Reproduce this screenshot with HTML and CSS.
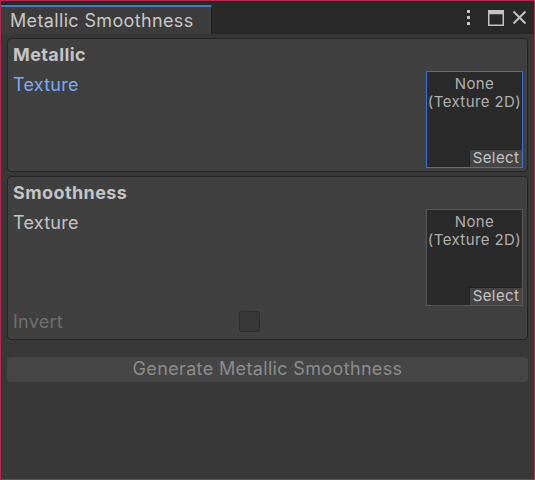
FILE: index.html
```html
<!DOCTYPE html>
<html>
<head>
<meta charset="utf-8">
<link rel="stylesheet" href="styles.css">
</head>
<body>
<div class="window">
  <div class="tabbar">
    <div class="tab">Metallic Smoothness</div>
    <div class="tab-icons">
      <svg class="ico" width="8" height="18" viewBox="0 0 8 18"><rect x="2" y="1" width="3" height="3" fill="#c4c4c4"/><rect x="2" y="7" width="3" height="3" fill="#c4c4c4"/><rect x="2" y="13" width="3" height="3" fill="#c4c4c4"/></svg>
      <svg class="ico" width="16" height="16" viewBox="0 0 16 16"><rect x="0.75" y="0.75" width="14.5" height="14.5" fill="none" stroke="#c4c4c4" stroke-width="1.5"/><rect x="0.75" y="0.75" width="14.5" height="3.5" fill="#c4c4c4"/></svg>
      <svg class="ico" width="15" height="15" viewBox="0 0 15 15"><path d="M1.5 1.5 L13.5 13.5 M13.5 1.5 L1.5 13.5" stroke="#c4c4c4" stroke-width="2" fill="none"/></svg>
    </div>
  </div>
  <div class="content">
    <div class="panel">
      <div class="heading">Metallic</div>
      <div class="tex-row">
        <div class="label label-active">Texture</div>
        <div class="field field-focus">
          <div class="field-text">None<br>(Texture 2D)</div>
          <div class="select">Select</div>
        </div>
      </div>
    </div>
    <div class="panel">
      <div class="heading">Smoothness</div>
      <div class="tex-row">
        <div class="label">Texture</div>
        <div class="field">
          <div class="field-text">None<br>(Texture 2D)</div>
          <div class="select">Select</div>
        </div>
      </div>
      <div class="toggle-row">
        <div class="label label-disabled toggle-label">Invert</div>
        <div class="checkbox"></div>
      </div>
    </div>
    <div class="button">Generate Metallic Smoothness</div>
  </div>
</div>
</body>
</html>
```
FILE: styles.css
```css
* { box-sizing: border-box; }
html, body { margin: 0; padding: 0; background: #383838; }
body { font-family: "Inter", "Noto Sans", sans-serif; letter-spacing: 0.25px; }
.window {
  width: 535px;
  height: 480px;
  border: 1px solid #b2284e;
  background: #383838;
  display: flex;
  flex-direction: column;
  overflow: hidden;
}
.tabbar {
  height: 33px;
  background: #282828;
  display: flex;
  align-items: flex-end;
  justify-content: space-between;
  flex-shrink: 0;
}
.tab {
  width: 211px;
  height: 29px;
  background: #3c3c3c;
  border-top: 2px solid #3a7ac6;
  border-right: 1px solid #1f1f1f;
  color: #c8c8c8;
  font-size: 18px;
  line-height: 27px;
  padding-left: 9px;
  white-space: nowrap;
  letter-spacing: 0.35px;
}
.tab-icons {
  align-self: flex-start;
  display: flex;
  align-items: flex-start;
  padding-top: 8px;
  padding-right: 7px;
}
.ico { display: block; }
.tab-icons .ico:nth-child(1) { margin-right: 15px; }
.tab-icons .ico:nth-child(2) { margin-right: 8px; margin-top: 1px; }
.tab-icons .ico:nth-child(3) { margin-top: 1px; }
.content {
  padding: 4px 6px 0 6px;
  display: flex;
  flex-direction: column;
  gap: 4px;
}
.panel {
  background: #404040;
  border: 1px solid #242424;
  border-radius: 4px;
  padding: 0 4px 3px 5px;
}
.heading {
  height: 32px;
  line-height: 31px;
  font-size: 18px;
  font-weight: 700;
  color: #c4c4c4;
  letter-spacing: 0.4px;
}
.tex-row {
  display: flex;
  justify-content: space-between;
  align-items: flex-start;
}
.label {
  font-size: 18px;
  line-height: 27px;
  color: #c4c4c4;
}
.label-active { color: #7baaf2; }
.label-disabled { color: #6e6e6e; }
.field {
  width: 97px;
  height: 97px;
  border: 1px solid #575757;
  background: #2a2a2a;
  display: flex;
  flex-direction: column;
  justify-content: space-between;
  align-items: stretch;
}
.field-focus { border-color: #3f6fd3; }
.field-text {
  text-align: center;
  font-size: 15px;
  line-height: 18px;
  color: #b0b0b0;
  padding-top: 3px;
  white-space: nowrap;
  letter-spacing: 0.4px;
}
.select {
  align-self: flex-end;
  width: 53px;
  height: 18px;
  background: #454545;
  border-top: 1px solid #232323;
  border-left: 1px solid #232323;
  color: #c4c4c4;
  font-size: 15px;
  line-height: 16px;
  text-align: center;
  letter-spacing: 0.4px;
}
.toggle-row {
  display: flex;
  align-items: center;
  height: 30px;
}
.toggle-label { width: 226px; }
.checkbox {
  width: 21px;
  height: 21px;
  border-radius: 3px;
  background: #383838;
  border: 1px solid #2e2e2e;
}
.button {
  margin-top: 13px;
  height: 25px;
  border-radius: 4px;
  background: #464646;
  color: #8c8c8c;
  font-size: 18px;
  line-height: 24px;
  text-align: center;
  letter-spacing: 0.35px;
}
```
